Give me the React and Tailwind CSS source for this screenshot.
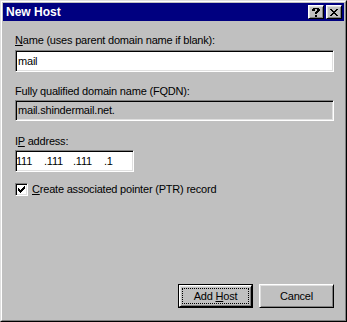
import React from "react";

const font = { fontFamily: '"Liberation Sans", Arial, sans-serif' };

function Sunken({ className = "", children }) {
  return (
    <div
      className={
        "border border-t-[#808080] border-l-[#808080] border-r-white border-b-white shadow-[inset_1px_1px_0_#000,inset_-1px_-1px_0_#dfdfdf] " +
        className
      }
    >
      {children}
    </div>
  );
}

function Raised({ className = "", children }) {
  return (
    <div
      className={
        "border border-t-white border-l-white border-r-black border-b-black shadow-[inset_1px_1px_0_#dfdfdf,inset_-1px_-1px_0_#808080] bg-[#c0c0c0] " +
        className
      }
    >
      {children}
    </div>
  );
}

export default function App() {
  return (
    <div
      className="w-[347px] h-[322px] bg-[#c0c0c0] border border-t-[#dfdfdf] border-l-[#dfdfdf] border-r-black border-b-black flex flex-col text-[11px] leading-[13px] tracking-[-0.2px] text-black"
      style={font}
    >
      <div className="flex-1 flex flex-col border border-t-white border-l-white border-r-[#808080] border-b-[#808080] p-px">
        {/* Title bar */}
        <div className="h-[18px] bg-[#000080] flex items-center pl-[3px] pr-[2px]">
          <span className="text-white font-bold text-[12px] tracking-normal leading-[14px]">
            New Host
          </span>
          <div className="flex-1" />
          <Raised className="w-[16px] h-[14px] flex items-center justify-center">
            <svg width="8" height="9" viewBox="0 0 8 9" shapeRendering="crispEdges">
              <path
                d="M1 0h6v1H1zM0 1h3v2H0zM5 1h3v2H5zM4 3h3v1H4zM3 4h3v1H3zM3 5h2v1H3zM3 7h2v2H3z"
                fill="#000"
              />
            </svg>
          </Raised>
          <div className="w-[2px]" />
          <Raised className="w-[16px] h-[14px] flex items-center justify-center">
            <svg width="8" height="7" viewBox="0 0 8 7" shapeRendering="crispEdges">
              <path
                d="M0 0h2v1H0zM6 0h2v1H6zM1 1h2v1H1zM5 1h2v1H5zM2 2h4v1H2zM3 3h2v1H3zM2 4h4v1H2zM1 5h2v1H1zM5 5h2v1H5zM0 6h2v1H0zM6 6h2v1H6z"
                fill="#000"
              />
            </svg>
          </Raised>
        </div>

        {/* Content */}
        <div className="flex-1 flex flex-col pl-[12px] pr-[10px]">
          <div className="mt-[13px]">
            <span className="underline underline-offset-[1px]">N</span>ame (uses parent domain
            name if blank):
          </div>
          <Sunken className="mt-[3px] h-[22px] bg-white flex items-center pl-[2px]">
            <span>mail</span>
          </Sunken>

          <div className="mt-[13px]">Fully qualified domain name (FQDN):</div>
          <Sunken className="mt-[2px] h-[21px] bg-[#c0c0c0] flex items-center pl-[2px]">
            <span>mail.shindermail.net.</span>
          </Sunken>

          <div className="mt-[14px]">
            I<span className="underline underline-offset-[1px]">P</span> address:
          </div>
          <Sunken className="mt-[2px] w-[119px] h-[22px] bg-white flex items-center pl-[0px]">
            <span className="w-[28px]">111</span>
            <span className="w-[29px]">.111</span>
            <span className="w-[31px]">.111</span>
            <span>.1</span>
          </Sunken>

          <div className="mt-[11px] flex items-center">
            <Sunken className="w-[13px] h-[13px] bg-white flex items-center justify-center">
              <svg width="7" height="7" viewBox="0 0 7 7" shapeRendering="crispEdges">
                <path
                  d="M6 0h1v3H6zM5 1h1v3H5zM4 2h1v3H4zM3 3h1v3H3zM2 4h1v3H2zM1 3h1v3H1zM0 2h1v3H0z"
                  fill="#000"
                />
              </svg>
            </Sunken>
            <span className="ml-[4px]">
              <span className="underline underline-offset-[1px]">C</span>reate associated pointer
              (PTR) record
            </span>
          </div>

          <div className="flex-1" />

          <div className="flex justify-end gap-[6px] mb-[11px]">
            <div className="w-[75px] h-[24px] border border-black flex">
              <Raised className="flex-1 flex p-[2px]">
                <div className="flex-1 border border-dotted border-black flex items-center justify-center">
                  <span>
                    Add <span className="underline underline-offset-[1px]">H</span>ost
                  </span>
                </div>
              </Raised>
            </div>
            <Raised className="w-[75px] h-[24px] flex items-center justify-center">
              <span>Cancel</span>
            </Raised>
          </div>
        </div>
      </div>
    </div>
  );
}
